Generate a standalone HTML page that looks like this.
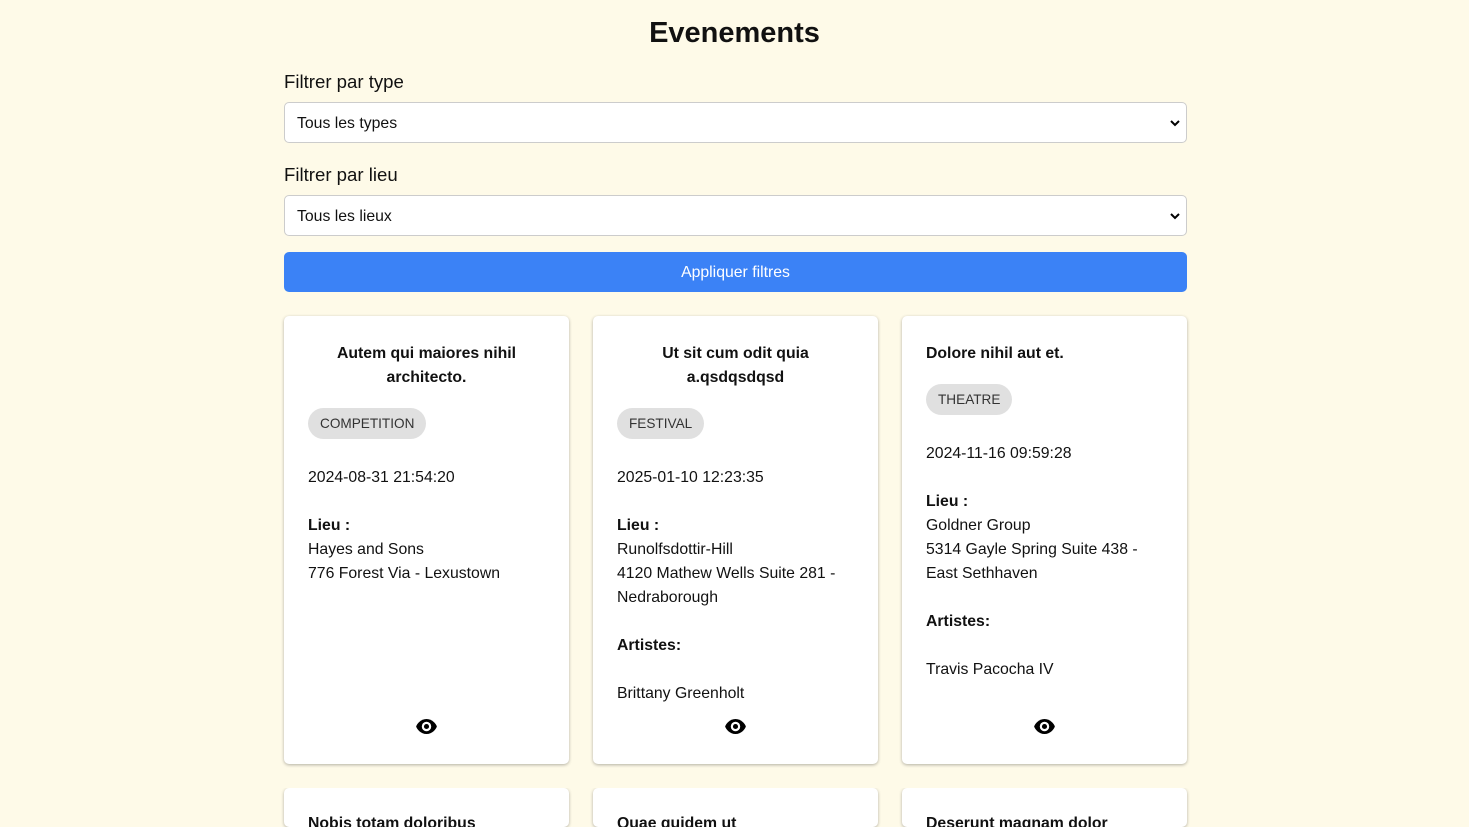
<!DOCTYPE html>
<html><head><style>
*{margin:0;padding:0;box-sizing:border-box}
html,body{width:1469px;height:827px;overflow:hidden}
body{background:#fefae8;font-family:"Liberation Sans",sans-serif;color:#111;position:relative;font-size:15.8px}
.a{position:absolute;white-space:nowrap}
h1{position:absolute;top:17px;left:0;width:1469px;text-align:center;font-size:29px;font-weight:bold}
.lbl{font-size:18.6px}
.sel{position:absolute;left:284px;width:903px;height:41px;background:#fff;border:1px solid #ccc;border-radius:5px;padding:0 12px;line-height:41px;font-size:15.8px}
.sel svg{position:absolute;right:6px;top:16px}
.btn{position:absolute;left:284px;top:252px;width:903px;height:40px;background:#3b82f6;border-radius:5px;color:#fff;text-align:center;line-height:42px;font-size:15.8px}
.card{position:absolute;width:285px;background:#fff;border-radius:5px;box-shadow:0 1px 3px rgba(0,0,0,.3)}
.t{font-weight:bold;line-height:24px}
.chip{position:absolute;background:#e0e0e0;border-radius:16px;height:31px;line-height:32px;padding:0 12px;font-size:13.6px;color:#333}
.l{line-height:24px}
.cut{position:absolute;left:0;top:788px;width:1469px;height:39px;overflow:hidden}
</style></head><body>
<h1>Evenements</h1>
<div class="a lbl" style="left:284px;top:71px">Filtrer par type</div>
<div class="sel" style="top:102px">Tous les types<svg width="10" height="8" viewBox="0 0 10 8"><path d="M1 2l4 4 4-4" stroke="#000" stroke-width="2" fill="none"/></svg></div>
<div class="a lbl" style="left:284px;top:164px">Filtrer par lieu</div>
<div class="sel" style="top:195px">Tous les lieux<svg width="10" height="8" viewBox="0 0 10 8"><path d="M1 2l4 4 4-4" stroke="#000" stroke-width="2" fill="none"/></svg></div>
<div class="btn">Appliquer filtres</div>

<div class="card" style="left:284px;top:316px;height:448px"></div>
<div class="card" style="left:593px;top:316px;height:448px"></div>
<div class="card" style="left:902px;top:316px;height:448px"></div>

<div class="a t" style="left:284px;width:285px;text-align:center;top:342px">Autem qui maiores nihil<br>architecto.</div>
<div class="chip" style="left:308px;top:408px">COMPETITION</div>
<div class="a l" style="left:308px;top:466px">2024-08-31 21:54:20</div>
<div class="a l" style="left:308px;top:514px"><b>Lieu :</b><br>Hayes and Sons<br>776 Forest Via - Lexustown</div>

<div class="a t" style="left:593px;width:285px;text-align:center;top:342px">Ut sit cum odit quia<br>a.qsdqsdqsd</div>
<div class="chip" style="left:617px;top:408px">FESTIVAL</div>
<div class="a l" style="left:617px;top:466px">2025-01-10 12:23:35</div>
<div class="a l" style="left:617px;top:514px"><b>Lieu :</b><br>Runolfsdottir-Hill<br>4120 Mathew Wells Suite 281 -<br>Nedraborough<br><br><b>Artistes:</b><br><br>Brittany Greenholt</div>

<div class="a t" style="left:926px;top:342px">Dolore nihil aut et.</div>
<div class="chip" style="left:926px;top:384px">THEATRE</div>
<div class="a l" style="left:926px;top:442px">2024-11-16 09:59:28</div>
<div class="a l" style="left:926px;top:490px"><b>Lieu :</b><br>Goldner Group<br>5314 Gayle Spring Suite 438 -<br>East Sethhaven<br><br><b>Artistes:</b><br><br>Travis Pacocha IV</div>

<svg class="a" style="left:415px;top:718px" width="23" height="17" viewBox="0 0 24 18"><path d="M12 1C6 1 2 6 1 9c1 3 5 8 11 8s10-5 11-8C22 6 18 1 12 1z" fill="#000"/><circle cx="12" cy="9" r="5" fill="#fff"/><circle cx="12" cy="9" r="2.7" fill="#000"/></svg>
<svg class="a" style="left:724px;top:718px" width="23" height="17" viewBox="0 0 24 18"><path d="M12 1C6 1 2 6 1 9c1 3 5 8 11 8s10-5 11-8C22 6 18 1 12 1z" fill="#000"/><circle cx="12" cy="9" r="5" fill="#fff"/><circle cx="12" cy="9" r="2.7" fill="#000"/></svg>
<svg class="a" style="left:1033px;top:718px" width="23" height="17" viewBox="0 0 24 18"><path d="M12 1C6 1 2 6 1 9c1 3 5 8 11 8s10-5 11-8C22 6 18 1 12 1z" fill="#000"/><circle cx="12" cy="9" r="5" fill="#fff"/><circle cx="12" cy="9" r="2.7" fill="#000"/></svg>

<div class="cut">
<div class="card" style="left:284px;top:0;height:39px"></div>
<div class="card" style="left:593px;top:0;height:39px"></div>
<div class="card" style="left:902px;top:0;height:39px"></div>
<div class="a t" style="left:308px;top:24px">Nobis totam doloribus</div>
<div class="a t" style="left:617px;top:24px">Quae quidem ut</div>
<div class="a t" style="left:926px;top:24px">Deserunt magnam dolor</div>
</div>
</body></html>
